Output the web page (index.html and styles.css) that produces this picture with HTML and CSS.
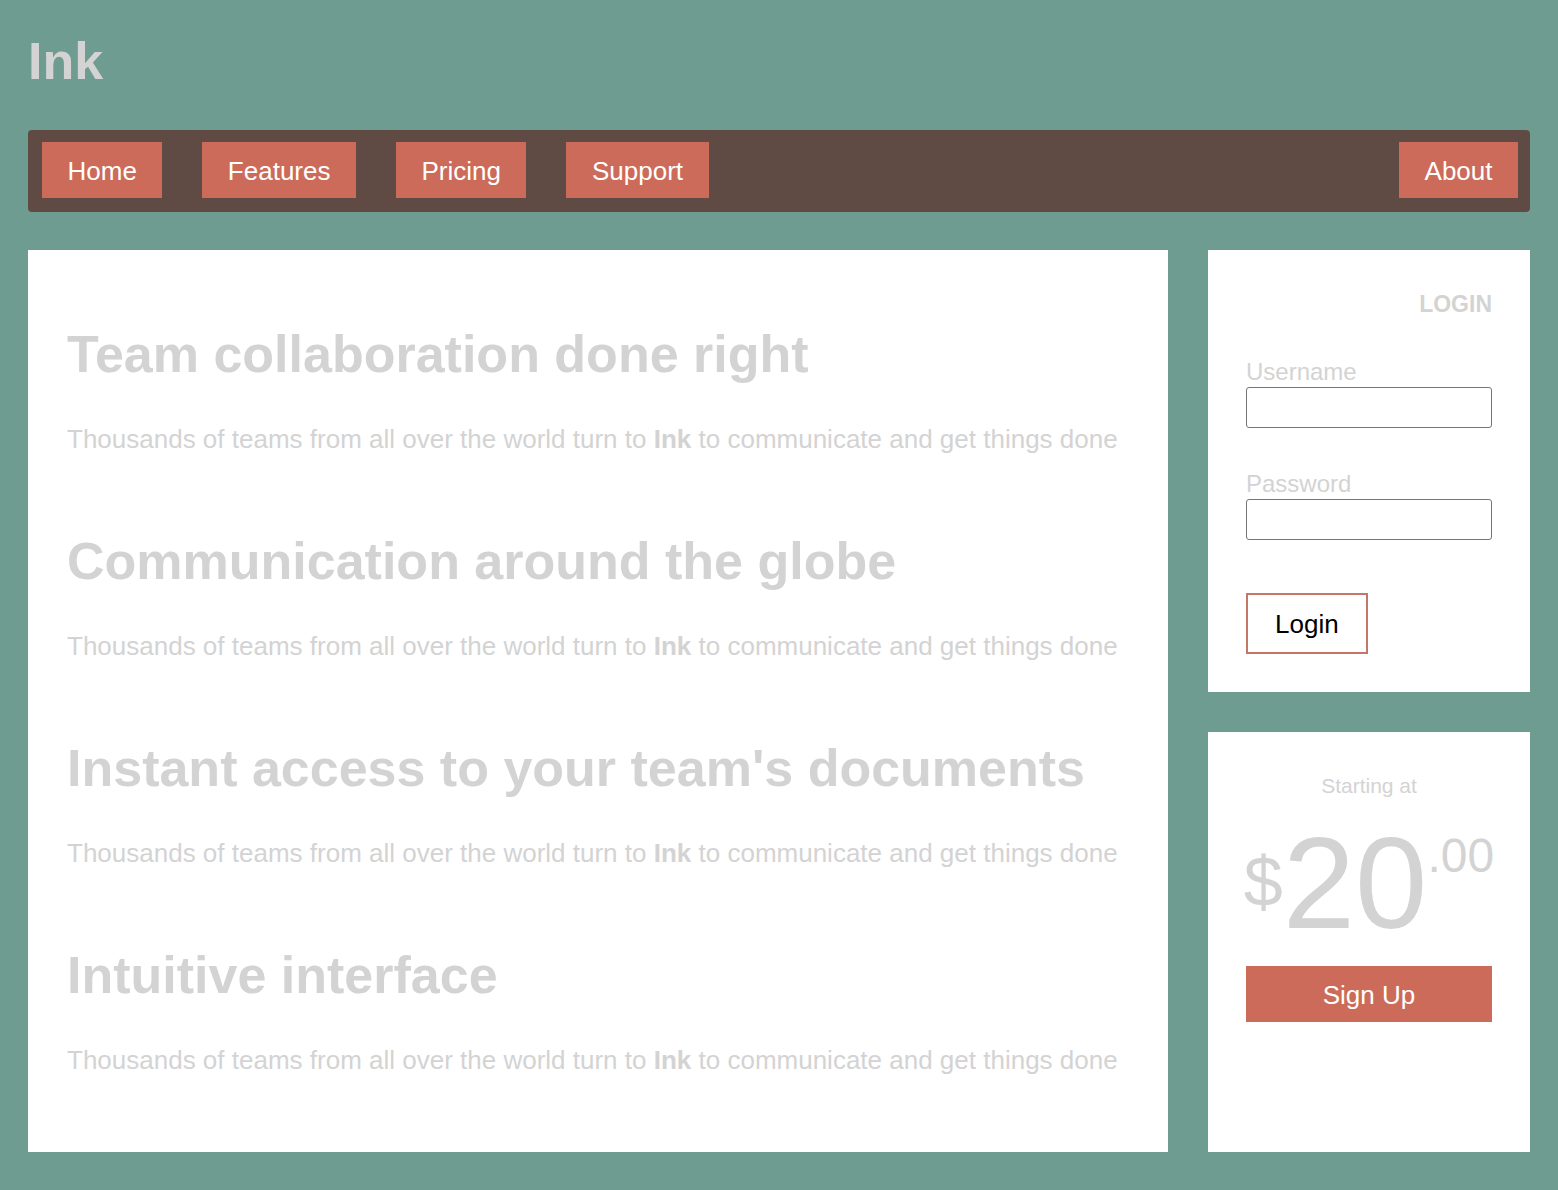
FILE: index.html
```html
<!DOCTYPE html>
<html lang="en">
<head>
<meta charset="utf-8">
<title>Ink</title>
<link rel="stylesheet" href="styles.css">
</head>
<body>
<div class="page">
  <h1 class="logo">Ink</h1>
  <nav class="nav">
    <a class="nav-btn" href="#">Home</a>
    <a class="nav-btn" href="#">Features</a>
    <a class="nav-btn" href="#">Pricing</a>
    <a class="nav-btn" href="#">Support</a>
    <a class="nav-btn nav-about" href="#">About</a>
  </nav>
  <div class="layout">
    <main class="content">
      <section class="feature">
        <h2 class="feature-title">Team collaboration done right</h2>
        <p class="feature-text">Thousands of teams from all over the world turn to <b>Ink</b> to communicate and get things done</p>
      </section>
      <section class="feature">
        <h2 class="feature-title">Communication around the globe</h2>
        <p class="feature-text">Thousands of teams from all over the world turn to <b>Ink</b> to communicate and get things done</p>
      </section>
      <section class="feature">
        <h2 class="feature-title">Instant access to your team's documents</h2>
        <p class="feature-text">Thousands of teams from all over the world turn to <b>Ink</b> to communicate and get things done</p>
      </section>
      <section class="feature">
        <h2 class="feature-title">Intuitive interface</h2>
        <p class="feature-text">Thousands of teams from all over the world turn to <b>Ink</b> to communicate and get things done</p>
      </section>
    </main>
    <aside class="sidebar">
      <form class="card login-card">
        <h3 class="login-title">LOGIN</h3>
        <div class="field">
          <label class="field-label" for="username">Username</label>
          <input class="field-input" id="username" type="text">
        </div>
        <div class="field">
          <label class="field-label" for="password">Password</label>
          <input class="field-input" id="password" type="password">
        </div>
        <button class="login-btn" type="button">Login</button>
      </form>
      <div class="card price-card">
        <div class="price-label">Starting at</div>
        <div class="price"><span class="price-currency">$</span><span class="price-main">20</span><span class="price-cents">.00</span></div>
        <button class="signup-btn" type="button">Sign Up</button>
      </div>
    </aside>
  </div>
</div>
</body>
</html>
```

FILE: styles.css
```css
html, body {
  margin: 0;
  padding: 0;
}

body {
  background: #6f9c91;
  font-family: "Liberation Sans", Arial, Helvetica, sans-serif;
  color: #d3d3d3;
}

.page {
  padding: 31px 28px 38px;
}

.logo {
  margin: 0;
  font-size: 52px;
  line-height: 60px;
  font-weight: bold;
  color: #d3d3d3;
}

.nav {
  margin-top: 39px;
  display: flex;
  gap: 40px;
  background: #5f4b44;
  border-radius: 4px;
  padding: 12px 12px 14px 14px;
}

.nav-btn {
  display: block;
  background: #cc6b5a;
  color: #fff;
  text-decoration: none;
  font-size: 26px;
  line-height: 30px;
  padding: 14px 25.5px 12px;
}

.nav-about {
  margin-left: auto;
}

.layout {
  margin-top: 38px;
  display: flex;
  gap: 40px;
  align-items: stretch;
}

.content {
  flex: 1;
  display: flex;
  flex-direction: column;
  background: #fff;
  padding: 37px 39px 37px;
}

.feature {
  display: flex;
  flex-direction: column;
}

.feature-title {
  margin: 37px 0 40px;
  font-size: 52px;
  line-height: 60px;
  font-weight: bold;
  color: #d3d3d3;
  white-space: nowrap;
}

.feature-text {
  margin: 0 0 40px;
  font-size: 26px;
  line-height: 30px;
  color: #d3d3d3;
  white-space: nowrap;
}

.feature-text b {
  font-weight: bold;
}

.sidebar {
  width: 322px;
  flex: none;
  display: flex;
  flex-direction: column;
  gap: 40px;
}

.card {
  background: #fff;
  box-sizing: border-box;
}

.login-card {
  margin: 0;
  padding: 41px 38px 38px;
  display: flex;
  flex-direction: column;
  align-items: flex-start;
}

.login-title {
  align-self: stretch;
  margin: 0 0 43px;
  text-align: right;
  font-size: 23px;
  line-height: 26px;
  font-weight: bold;
  color: #d3d3d3;
}

.field {
  align-self: stretch;
  display: flex;
  flex-direction: column;
  margin-bottom: 44px;
}

.field + .field {
  margin-bottom: 53px;
}

.field-label {
  font-size: 24px;
  line-height: 23px;
  padding-bottom: 4px;
  color: #d3d3d3;
}

.field-input {
  box-sizing: border-box;
  width: 100%;
  height: 41px;
  margin: 0;
  border: 1px solid #767676;
  border-radius: 3px;
  background: #fff;
  font-size: 20px;
  padding: 0 6px;
}

.login-btn {
  margin: 0;
  background: #fff;
  border: 2px solid #c47767;
  color: #000;
  font-family: "Liberation Sans", Arial, Helvetica, sans-serif;
  font-size: 26px;
  line-height: 30px;
  padding: 14px 27px 13px;
  border-radius: 0;
}

.price-card {
  flex: 1;
  padding: 42px 38px 38px;
  display: flex;
  flex-direction: column;
}

.price-label {
  text-align: center;
  font-size: 21px;
  line-height: 24px;
  color: #d3d3d3;
  margin-bottom: 20px;
}

.price {
  margin: 0 -4px 18px;
  text-align: center;
  font-size: 130px;
  line-height: 1;
  height: 130px;
  color: #d3d3d3;
  white-space: nowrap;
}

.price-currency {
  font-size: 70px;
  vertical-align: 22px;
}

.price-main {
  font-size: 130px;
}

.price-cents {
  font-size: 48px;
  vertical-align: 56px;
}

.signup-btn {
  display: block;
  width: 100%;
  margin: 0;
  border: none;
  background: #cc6b5a;
  color: #fff;
  font-family: "Liberation Sans", Arial, Helvetica, sans-serif;
  font-size: 26px;
  line-height: 30px;
  padding: 14px 0 12px;
  border-radius: 0;
}
```
